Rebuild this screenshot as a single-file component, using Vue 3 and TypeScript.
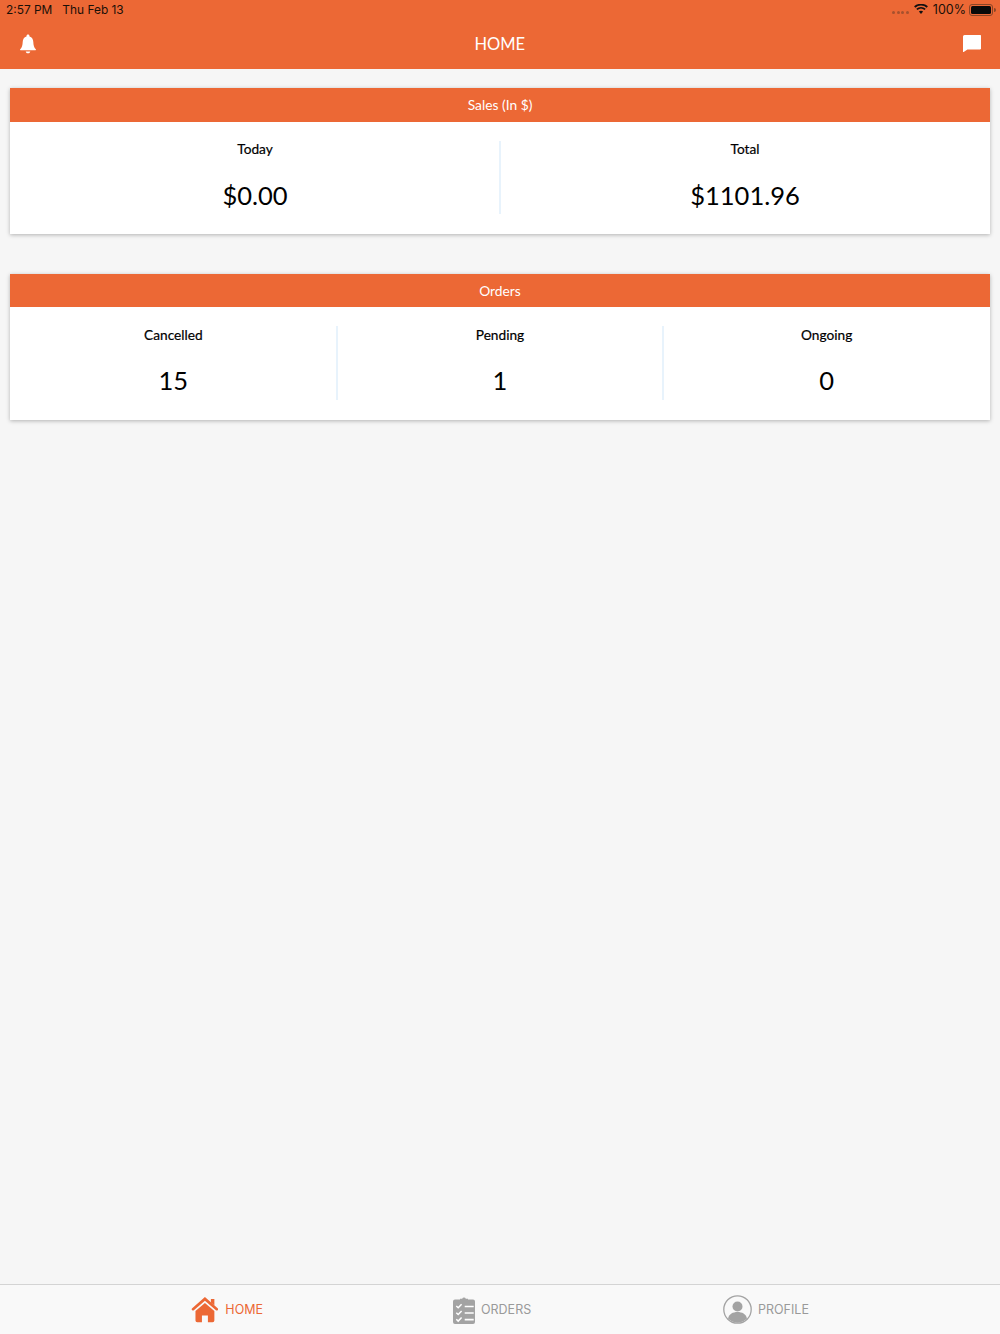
<script setup lang="ts">
const sales = [
  { label: 'Today', value: '$0.00' },
  { label: 'Total', value: '$1101.96' },
]
const orders = [
  { label: 'Cancelled', value: '15' },
  { label: 'Pending', value: '1' },
  { label: 'Ongoing', value: '0' },
]
</script>

<template>
  <div class="page">
    <header class="top">
      <div class="status">
        <span class="time">2:57 PM</span>
        <span class="date">Thu Feb 13</span>
        <span class="spacer"></span>
        <span class="dots"><i></i><i></i><i></i><i></i></span>
        <svg class="wifi" viewBox="0 0 16 12" width="14" height="10.500">
          <path d="M8 11.500 5.600 8.700a3.600 3.600 0 0 1 4.800 0Z" fill="#111" />
          <path d="M3.900 6.900a6.200 6.200 0 0 1 8.200 0l1.300-1.500a8.200 8.200 0 0 0-10.800 0Z" fill="#111" />
          <path d="M1.500 4.200a9.900 9.900 0 0 1 13 0L15.900 2.700a11.900 11.900 0 0 0-15.800 0Z" fill="#111" />
        </svg>
        <span class="pct">100%</span>
        <span class="battery"><span class="fill"></span></span>
        <span class="nub"></span>
      </div>
      <div class="nav">
        <svg class="bell" viewBox="0 0 16 20" width="16" height="20">
          <path d="M8 .4c-.9 0-1.500.6-1.500 1.500v.5C3.900 3.100 2.800 5.200 2.700 8c-.1 3.300-.8 5.600-2.500 7.300-.3.3-.2.9.3.9h15c.5 0 .6-.6.3-.9-1.700-1.700-2.400-4-2.500-7.300-.1-2.800-1.200-4.900-3.800-5.600v-.5C9.500 1 8.900.4 8 .4Z" fill="#fff" />
          <path d="M5.700 17.400h4.600C10 18.600 9.100 19.300 8 19.300s-2-.7-2.300-1.900Z" fill="#fff" />
        </svg>
        <span class="title">HOME</span>
        <svg class="chat" viewBox="0 0 18 17" width="18.500" height="17.500">
          <path d="M1.500 0h15A1.500 1.500 0 0 1 18 1.500v11a1.500 1.500 0 0 1-1.500 1.500H4.300L0 17V1.500A1.500 1.500 0 0 1 1.500 0Z" fill="#fff" />
        </svg>
      </div>
    </header>

    <main class="content">
      <section class="card">
        <h2 class="card-head">Sales (In $)</h2>
        <div class="card-body">
          <div v-for="s in sales" :key="s.label" class="stat">
            <div class="label">{{ s.label }}</div>
            <div class="value">{{ s.value }}</div>
          </div>
        </div>
      </section>
      <section class="card">
        <h2 class="card-head">Orders</h2>
        <div class="card-body">
          <div v-for="o in orders" :key="o.label" class="stat">
            <div class="label">{{ o.label }}</div>
            <div class="value">{{ o.value }}</div>
          </div>
        </div>
      </section>
    </main>

    <nav class="tabs">
      <div class="tab tab-home active">
        <svg viewBox="0 0 28 27" width="28" height="27">
          <path d="M20 3h3.500v6.500L20 6.500Z" fill="#ec6835" />
          <path d="M14 1 1.200 12.200a1.300 1.300 0 0 0 1.700 2L14 4.600l11.100 9.600a1.300 1.300 0 0 0 1.700-2Z" fill="#ec6835" />
          <path d="M14 7 4.500 15v9.500A1.800 1.800 0 0 0 6.300 26.300h4.700v-6.800h6v6.800h4.700a1.800 1.800 0 0 0 1.800-1.800V15Z" fill="#ec6835" />
        </svg>
        <span>HOME</span>
      </div>
      <div class="tab tab-orders">
        <svg viewBox="0 0 22 28" width="22" height="28">
          <path d="M2 3.500h5V2.800h2.200a1.900 1.900 0 0 1 3.600 0H15v.7h5A2 2 0 0 1 22 5.500v20.500a2 2 0 0 1-2 2H2a2 2 0 0 1-2-2V5.500a2 2 0 0 1 2-2Z" fill="#a3a3a3" />
          <path d="M3.300 10l1.900 1.800 3.400-3.500M3.300 16.700l1.900 1.800 3.400-3.500M3.300 23.300l1.900 1.800 3.400-3.500" fill="none" stroke="#fff" stroke-width="1.500" />
          <path d="M11.700 10.500h9M11.700 17h9M11.700 23.700h9" fill="none" stroke="#fff" stroke-width="1.700" />
        </svg>
        <span>ORDERS</span>
      </div>
      <div class="tab tab-profile">
        <svg viewBox="0 0 29 29" width="29" height="29">
          <circle cx="14.500" cy="14.500" r="13.700" fill="none" stroke="#a3a3a3" stroke-width="1.300" />
          <circle cx="14.500" cy="11.500" r="5" fill="#a3a3a3" />
          <path d="M5 23.500c1-4.500 5-6.500 9.500-6.500s8.500 2 9.500 6.500a13 13 0 0 1-19 0Z" fill="#a3a3a3" />
        </svg>
        <span>PROFILE</span>
      </div>
    </nav>
  </div>
</template>

<style scoped>
.page {
  min-height: 1334px;
  display: flex;
  flex-direction: column;
  background: #f6f6f6;
  font-family: Lato, "Liberation Sans", sans-serif;
}
.top {
  height: 69px;
  background: #ec6835;
  flex: none;
}
.status {
  height: 20px;
  display: flex;
  align-items: center;
  padding: 0 4px 1px 6px;
  box-sizing: border-box;
  font-family: Inter, "Liberation Sans", sans-serif;
  font-size: 11.900px;
  color: #1a1008;
}
.date { margin-left: 10px; }
.spacer { flex: 1; }
.dots { display: flex; gap: 1.500px; margin-right: 5px; margin-top: 6px; }
.dots i {
  width: 3px;
  height: 3px;
  border-radius: 50%;
  background: #a6512e;
}
.wifi { margin-right: 5px; }
.pct { margin-right: 3px; font-size: 12.500px; }
.battery {
  width: 24px;
  height: 12px;
  box-sizing: border-box;
  border: 1px solid #8a4526;
  border-radius: 3px;
  padding: 1px;
  display: flex;
}
.fill { flex: 1; background: #0a0a0a; border-radius: 1.500px; }
.nub {
  width: 2px;
  height: 4px;
  background: #8a4526;
  margin-left: 1px;
  border-radius: 0 2px 2px 0;
}
.nav {
  height: 49px;
  display: flex;
  align-items: center;
  justify-content: space-between;
  padding: 0 19px 0 20px;
}
.bell { margin-bottom: 1px; }
.chat { margin-bottom: 2px; }
.title {
  color: #fff;
  font-size: 16.500px;
  margin-bottom: 2px;
  margin-left: 1px;
}
.content {
  flex: 1;
  padding: 19px 10px 0;
  display: flex;
  flex-direction: column;
  gap: 39.400px;
}
.card {
  background: #fff;
  box-shadow: 0 1px 4px rgba(0, 0, 0, 0.28);
}
.card-head {
  margin: 0;
  height: 33.700px;
  line-height: 34px;
  text-align: center;
  background: #ec6835;
  color: #fff;
  font-size: 13.800px;
  font-weight: 400;
}
.card-body {
  display: flex;
  padding: 19px 0 20px;
}
.stat {
  flex: 1;
  height: 73.700px;
  text-align: center;
  color: #000;
}
.stat + .stat {
  box-shadow: -1px 0 0 #e8f3fc, inset 1px 0 0 #e8f3fc;
}
.label {
  font-size: 13.700px;
  line-height: 16px;
  padding-top: 0.300px;
  -webkit-text-stroke: 0.2px #000;
}
.value {
  font-size: 25.500px;
  line-height: 32px;
  margin-top: 21.700px;
}
.tabs {
  flex: none;
  height: 50px;
  box-sizing: border-box;
  border-top: 1px solid #d4d4d4;
  background: #f9f9f9;
  display: flex;
  font-family: Inter, "Liberation Sans", sans-serif;
  font-size: 12.500px;
  color: #9a9a9a;
}
.tab {
  display: flex;
  align-items: center;
  gap: 7px;
}
.tab span { margin-bottom: 0.500px; }
.tab-home { padding-left: 190.500px; width: 263px; box-sizing: border-box; }
.tab-orders { padding-left: 190px; width: 460px; box-sizing: border-box; gap: 6px; }
.tab-profile { flex: 1; gap: 6px; }
.active { color: #ec6835; }
</style>
